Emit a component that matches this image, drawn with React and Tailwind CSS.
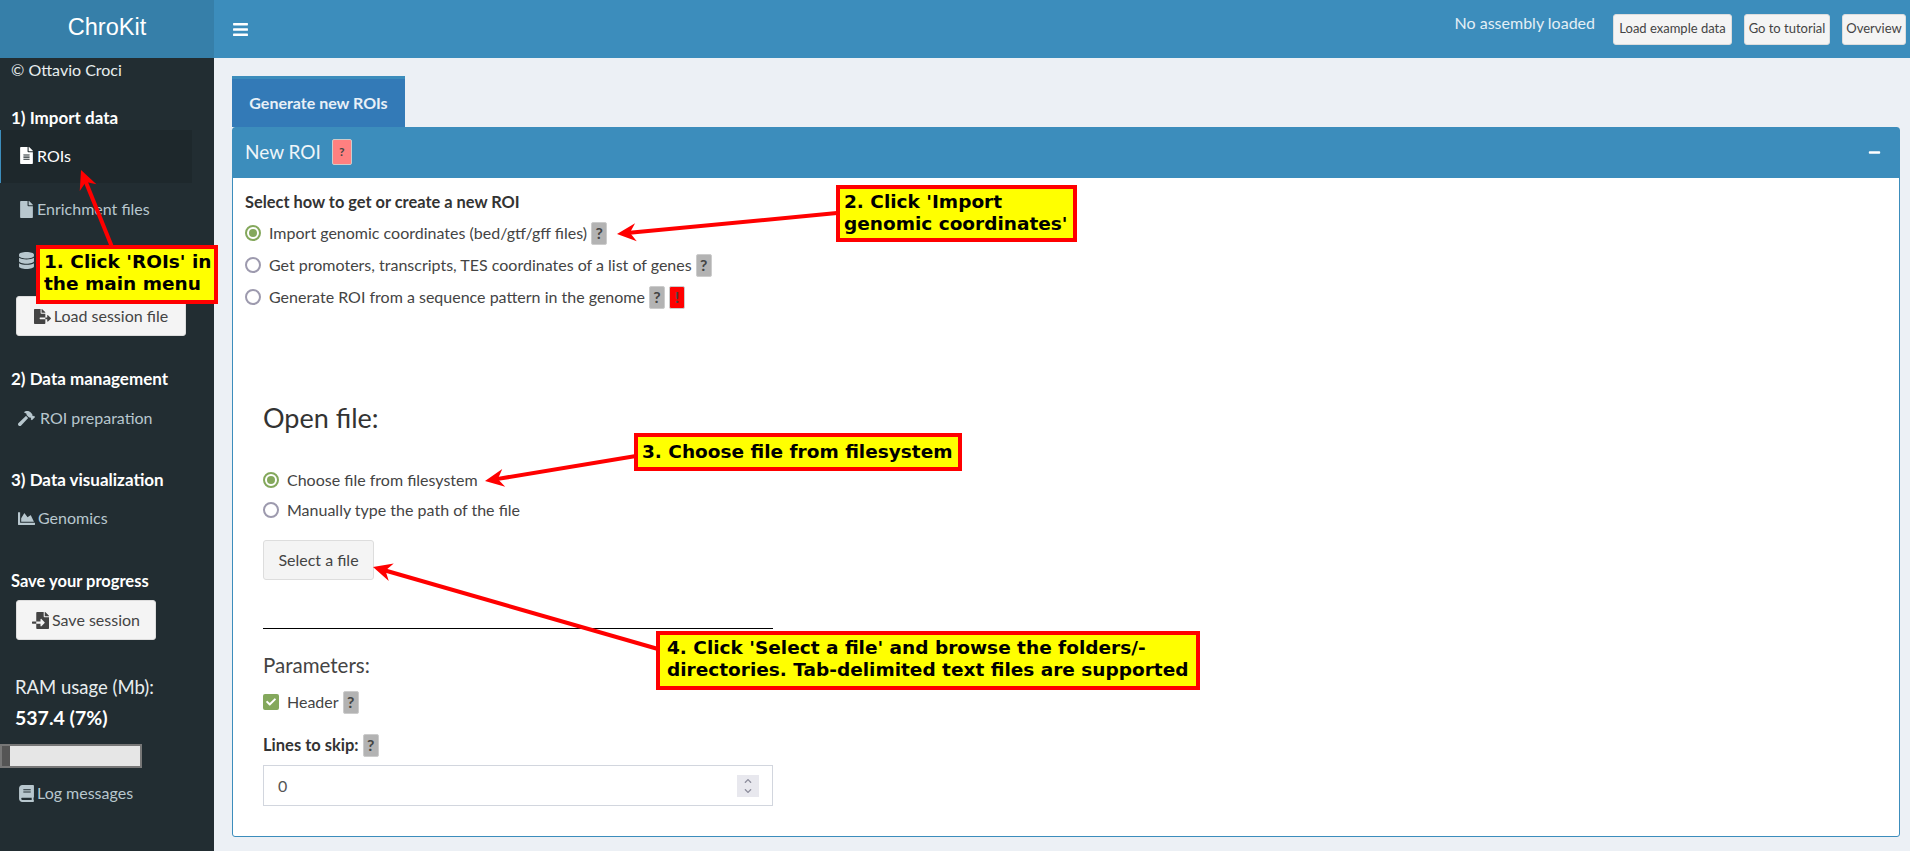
import React from 'react';
import { FaBars, FaBook, FaChartArea, FaCheck, FaChevronDown, FaChevronUp, FaDatabase, FaFile, FaFileAlt, FaFileExport, FaFileImport, FaHammer, FaMinus } from 'react-icons/fa';

const Help = ({ color = 'bg-[#b3b3b3]', text = '?', className = '' }) => (
    <span className={`inline-flex h-[23px] w-[16px] items-center justify-center rounded-[2px] border border-[#ccc] text-[16px] font-bold leading-none text-[#444] ${color} ${className}`}>
        {text}
    </span>
);

const Radio = ({ checked, children }) => (
    <div className="flex h-[32px] items-center gap-[8px] text-[16px] text-[#444]">
        <span className={`flex h-[16px] w-[16px] items-center justify-center rounded-full border-2 bg-white ${checked ? 'border-[#84a85c]' : 'border-[#9d9aae]'}`}>
            {checked && <span className="h-[8px] w-[8px] rounded-full bg-[#84a85c]" />}
        </span>
        {children}
    </div>
);

const NavItem = ({ icon, label, className = '' }) => (
    <div className={`flex items-center gap-[2px] pl-[18px] text-[16px] leading-[20px] text-[#b8c7ce] ${className}`}>
        {icon}
        <span>{label}</span>
    </div>
);

const SideButton = ({ icon, label, className = '' }) => (
    <button className={`ml-[16px] flex h-[40px] items-center justify-center gap-[3px] rounded-[3px] border border-[#ddd] bg-[#f4f4f4] text-[16px] text-[#444] ${className}`}>
        {icon}
        {label}
    </button>
);

const TopButton = ({ label, className = '' }) => (
    <button className={`flex h-[31px] items-center justify-center rounded-[3px] border border-[#ddd] bg-[#f4f4f4] text-[13px] text-[#444] ${className}`}>
        {label}
    </button>
);

const Note = ({ className, children }) => (
    <div className={`absolute border-[4px] border-[#ff0000] bg-[#ffff00] pt-[2px] pl-[4px] font-['DejaVu_Sans',sans-serif] text-[18.5px] font-bold leading-[22px] text-black ${className}`}>
        {children}
    </div>
);

// red arrows drawn over the page, coordinates are page pixels
const Arrow = ({ x1, y1, x2, y2 }) => {
    const a = Math.atan2(y2 - y1, x2 - x1);
    const p = (d, s) => `${x2 - Math.cos(a) * d - Math.sin(a) * s},${y2 - Math.sin(a) * d + Math.cos(a) * s}`;
    return (
        <>
            <line x1={x1} y1={y1} x2={x2 - Math.cos(a) * 10} y2={y2 - Math.sin(a) * 10} stroke="#ff0000" strokeWidth="4" />
            <polygon points={`${x2},${y2} ${p(19, 9)} ${p(13, 0)} ${p(19, -9)}`} fill="#ff0000" />
        </>
    );
};

const App = () => {
    return (
        <div className="relative flex h-[851px] w-[1910px] overflow-hidden bg-[#ecf0f5] font-['Lato',sans-serif]">
            {/* sidebar */}
            <aside className="flex w-[214px] shrink-0 flex-col bg-[#222d32] text-white">
                <div className="flex h-[58px] items-center justify-center bg-[#367fa9] pb-[2px] font-['Liberation_Sans',sans-serif] text-[23.5px]">ChroKit</div>
                <p className="mt-[2px] pl-[11px] text-[16px] leading-[20px] text-[#e8edef]">© Ottavio Croci</p>
                <h4 className="mt-[28px] pl-[11px] text-[17px] font-bold leading-[20px]">1) Import data</h4>
                <div className="mt-[2px] flex h-[53px] w-[192px] items-center gap-[2px] border-l-[1px] border-[#3c8dbc] bg-[#1e282c] pb-[2px] pl-[17px] text-[16px] text-white">
                    <FaFileAlt className="text-[17px]" />
                    <span>ROIs</span>
                </div>
                <NavItem className="mt-[16px]" icon={<FaFile className="text-[17px]" />} label="Enrichment files" />
                <NavItem className="mt-[33px]" icon={<FaDatabase className="text-[17px]" />} label="" />
                <SideButton className="mt-[27px] w-[170px]" icon={<FaFileExport className="text-[17px]" />} label="Load session file" />
                <h4 className="mt-[33px] pl-[11px] text-[17px] font-bold leading-[20px]">2) Data management</h4>
                <NavItem className="mt-[19px] !gap-[5px]" icon={<FaHammer className="text-[17px]" />} label="ROI preparation" />
                <h4 className="mt-[42px] pl-[11px] text-[17px] font-bold leading-[20px]">3) Data visualization</h4>
                <NavItem className="mt-[18px] !gap-[3px]" icon={<FaChartArea className="text-[17px]" />} label="Genomics" />
                <h4 className="mt-[43px] pl-[11px] text-[16.5px] font-bold leading-[20px]">Save your progress</h4>
                <SideButton className="mt-[9px] w-[140px]" icon={<FaFileImport className="text-[17px]" />} label="Save session" />
                <p className="mt-[35px] pl-[15px] text-[18.5px] leading-[24px] text-[#e8edef]">RAM usage (Mb):</p>
                <p className="mt-[7px] pl-[15px] text-[19.5px] font-bold leading-[24px]">537.4 (7%)</p>
                <div className="mt-[14px] h-[24px] w-[142px] border-2 border-[#777] bg-[#e6e6e6]">
                    <div className="h-full w-[8px] bg-[#555]" />
                </div>
                <NavItem className="mt-[15px]" icon={<FaBook className="text-[17px]" />} label="Log messages" />
            </aside>

            <div className="flex min-w-0 flex-1 flex-col">
                {/* top bar */}
                <header className="flex h-[58px] shrink-0 items-center bg-[#3c8dbc] pr-[4px] pl-[18px]">
                    <FaBars className="text-[17px] text-white" />
                    <span className="ml-auto pb-[12px] text-[16px] text-[#e3eff6]">No assembly loaded</span>
                    <TopButton className="ml-[18px] w-[119px]" label="Load example data" />
                    <TopButton className="ml-[12px] w-[86px]" label="Go to tutorial" />
                    <TopButton className="ml-[12px] w-[64px]" label="Overview" />
                </header>

                <main className="flex flex-1 flex-col pt-[18px] pr-[10px] pl-[18px]">
                    <div className="flex h-[51px] w-[173px] items-center justify-center border-t-[3px] border-[#3c8dbc] bg-[#337ab7] pb-[1px] text-[16px] font-bold text-[#e8f0f7]">
                        Generate new ROIs
                    </div>
                    <section className="flex h-[710px] flex-col rounded-[3px] border border-[#3c8dbc] bg-white">
                        <div className="flex h-[50px] shrink-0 items-center bg-[#3c8dbc] pr-[18px] pb-[2px] pl-[12px] text-white">
                            <span className="text-[19px] text-[#eef5f9]">New ROI</span>
                            <Help color="bg-[#ff8080]" className="ml-[11px] !h-[26px] !w-[20px] !text-[12px]" />
                            <FaMinus className="ml-auto text-[13px]" />
                        </div>

                        <div className="pt-[14px] pl-[12px]">
                            <p className="text-[16.4px] font-bold leading-[20px] text-[#333]">Select how to get or create a new ROI</p>
                            <div className="mt-[5px]">
                                <Radio checked>
                                    <span className="flex items-center gap-[4px]">Import genomic coordinates (bed/gtf/gff files) <Help /></span>
                                </Radio>
                                <Radio>
                                    <span className="flex items-center gap-[4px]">Get promoters, transcripts, TES coordinates of a list of genes <Help /></span>
                                </Radio>
                                <Radio>
                                    <span className="flex items-center gap-[4px]">Generate ROI from a sequence pattern in the genome <Help /> <Help color="bg-[#ff0000]" text="!" /></span>
                                </Radio>
                            </div>
                        </div>

                        <div className="box-content flex w-[510px] flex-col pl-[30px]">
                            <h3 className="mt-[88px] text-[27px] font-normal leading-[34px] text-[#333]">Open file:</h3>
                            <div className="mt-[29px]">
                                <Radio checked>Choose file from filesystem</Radio>
                                <div className="-mt-[2px]">
                                    <Radio>Manually type the path of the file</Radio>
                                </div>
                            </div>
                            <button className="mt-[14px] h-[40px] w-[111px] rounded-[3px] border border-[#ddd] bg-[#f4f4f4] text-[16px] text-[#444]">Select a file</button>
                            <div className="mt-[48px] h-px bg-black" />
                            <h4 className="mt-[24px] text-[20.5px] font-normal leading-[24px] text-[#444]">Parameters:</h4>
                            <div className="mt-[13px] flex h-[24px] items-center gap-[8px] text-[16px] text-[#444]">
                                <span className="flex h-[16px] w-[16px] items-center justify-center rounded-[2px] bg-[#84a85c] text-white">
                                    <FaCheck className="text-[10px]" />
                                </span>
                                <span className="flex items-center gap-[4px]">Header <Help /></span>
                            </div>
                            <p className="mt-[19px] flex h-[24px] items-center gap-[4px] text-[16.5px] font-bold text-[#333]">Lines to skip: <Help /></p>
                            <div className="mt-[8px] flex h-[41px] items-center justify-between border border-[#d2d6de] pr-[13px] pl-[14px] text-[16px] text-[#555]">
                                0
                                <span className="flex h-[22px] w-[22px] flex-col items-center justify-center bg-[#e8e8ee] text-[#8d8d9c]">
                                    <FaChevronUp className="text-[8px]" />
                                    <FaChevronDown className="mt-[2px] text-[8px]" />
                                </span>
                            </div>
                        </div>
                    </section>
                </main>
            </div>

            {/* tutorial annotations */}
            <svg className="pointer-events-none absolute top-0 left-0" width="1910" height="851">
                <Arrow x1={112} y1={247} x2={81} y2={170} />
                <Arrow x1={837} y1={213} x2={617} y2={234} />
                <Arrow x1={636} y1={456} x2={485} y2={481} />
                <Arrow x1={658} y1={649} x2={373} y2={567} />
            </svg>
            <Note className="top-[245px] left-[36px] h-[59px] w-[182px]">1. Click 'ROIs' in<br />the main menu</Note>
            <Note className="top-[185px] left-[836px] h-[57px] w-[241px]">2. Click 'Import<br />genomic coordinates'</Note>
            <Note className="top-[433px] left-[634px] h-[38px] w-[328px] !pt-0 !leading-[30px]">3. Choose file from filesystem</Note>
            <Note className="top-[631px] left-[656px] h-[59px] w-[544px] !pl-[7px]">4. Click 'Select a file' and browse the folders/-<br />directories. Tab-delimited text files are supported</Note>
        </div>
    );
};

export default App;
